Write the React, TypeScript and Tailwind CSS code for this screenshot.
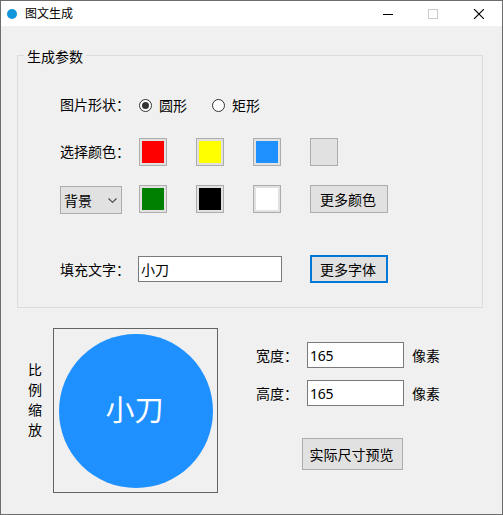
import { useState } from "react";

type Shape = "circle" | "rect";

const COLOR_ROWS = [
  [
    { name: "red", className: "bg-[#ff0000]" },
    { name: "yellow", className: "bg-[#ffff00]" },
    { name: "blue", className: "bg-[#1e90ff]" },
  ],
  [
    { name: "green", className: "bg-[#008000]" },
    { name: "black", className: "bg-black" },
    { name: "white", className: "bg-white" },
  ],
];

const BUTTON = "flex items-center justify-center border border-[#adadad] bg-[#e1e1e1] whitespace-nowrap";
const INPUT = "border border-[#7a7a7a] bg-white px-[2px] outline-none";

function TitleBar() {
  return (
    <div className="flex h-[25px] items-center bg-white pl-[6px]">
      <span className="h-[10px] w-[10px] rounded-full bg-[#1296db]" />
      <span className="ml-2 text-[12px] leading-[16px]">图文生成</span>
      <svg className="ml-auto mr-[18px] h-[10px] w-[101px]" viewBox="0 0 101 10" fill="none" shapeRendering="crispEdges">
        <path d="M0 5.5H10" stroke="#000" />
        <rect x="45.5" y="0.5" width="9" height="9" stroke="#ccc" />
        <path d="M91 0L101 10M101 0L91 10" stroke="#000" strokeWidth="1.1" shapeRendering="auto" />
      </svg>
    </div>
  );
}

function Radio({ label, checked, onSelectAction }: { label: string; checked: boolean; onSelectAction: () => void }) {
  return (
    <button type="button" role="radio" aria-checked={checked} onClick={onSelectAction} className="flex items-center">
      <span className="flex h-[13px] w-[13px] items-center justify-center rounded-full border border-[#333] bg-white">
        {checked && <span className="h-[7px] w-[7px] rounded-full bg-[#333]" />}
      </span>
      <span className="ml-[7px] mt-[2px]">{label}</span>
    </button>
  );
}

function Swatches({ colors }: { colors: { name: string; className: string }[] }) {
  return (
    <div className="flex gap-[29px]">
      {colors.map((color) => (
        <button
          key={color.name}
          type="button"
          aria-label={color.name}
          className="h-7 w-7 border border-[#adadad] bg-[#e1e1e1] p-[2px]"
        >
          <span className={`block h-[22px] w-[22px] ${color.className}`} />
        </button>
      ))}
    </div>
  );
}

function SizeField({ label, value, onChangeAction }: { label: string; value: string; onChangeAction: (v: string) => void }) {
  return (
    <div className="flex h-[26px] items-center">
      <span className="w-[51px] pt-[2px] whitespace-nowrap">{label}</span>
      <input
        value={value}
        onChange={(event) => onChangeAction(event.target.value)}
        className={`h-[26px] w-[97px] text-[14px] tracking-[-0.2px] ${INPUT}`}
      />
      <span className="ml-2 pt-[2px]">像素</span>
    </div>
  );
}

export default function App() {
  const [shape, setShape] = useState<Shape>("circle");
  const [text, setText] = useState("小刀");
  const [width, setWidth] = useState("165");
  const [height, setHeight] = useState("165");

  return (
    <div className="h-[515px] w-[503px] overflow-hidden border border-[#6d6d6d] bg-[#f0f0f0] font-['Noto_Sans','Noto_Sans_CJK_SC',sans-serif] text-[14px] leading-[20px] text-black">
      <TitleBar />

      <fieldset className="ml-4 mt-[19px] h-[263px] w-[466px] border border-[#dcdcdc]">
        <legend className="ml-[6px] h-[20px] px-[3px]">
          <span className="relative top-[2px]">生成参数</span>
        </legend>
        <div className="pl-[42px] pt-[30px]">
          <div className="flex h-[20px] items-center">
            <span className="w-[79px] whitespace-nowrap">图片形状：</span>
            <div className="flex gap-[25px]">
              <Radio label="圆形" checked={shape === "circle"} onSelectAction={() => setShape("circle")} />
              <Radio label="矩形" checked={shape === "rect"} onSelectAction={() => setShape("rect")} />
            </div>
          </div>

          <div className="mt-[23px] flex h-7 items-center">
            <span className="w-[79px] whitespace-nowrap">选择颜色：</span>
            <Swatches colors={COLOR_ROWS[0]} />
            <button type="button" aria-label="custom" className={`ml-[29px] h-7 w-7 ${BUTTON}`} />
          </div>

          <div className="mt-[19px] flex h-7 items-center">
            <button
              type="button"
              className="mr-[17px] mt-[2px] flex h-7 w-[62px] items-center justify-between border border-[#adadad] bg-[#e1e1e1] pl-[3px] pr-1"
            >
              <span className="mt-[2px]">背景</span>
              <svg className="h-[5px] w-[9px]" viewBox="0 0 9 5" fill="none">
                <path d="M0.5 0.5L4.5 4.3L8.5 0.5" stroke="#444" strokeWidth="1.1" />
              </svg>
            </button>
            <Swatches colors={COLOR_ROWS[1]} />
            <button type="button" className={`ml-[29px] h-7 w-[78px] pr-[2px] pt-[2px] ${BUTTON}`}>
              更多颜色
            </button>
          </div>

          <div className="mt-[42px] flex h-7 items-center">
            <span className="w-[78px] pt-[2px] whitespace-nowrap">填充文字：</span>
            <input
              value={text}
              onChange={(event) => setText(event.target.value)}
              className={`h-[26px] w-[144px] ${INPUT}`}
            />
            <button
              type="button"
              className="ml-7 flex h-7 w-[78px] items-center justify-center border-2 border-[#0078d7] bg-[#e1e1e1] pr-[2px] pt-[2px] whitespace-nowrap"
            >
              更多字体
            </button>
          </div>
        </div>
      </fieldset>

      <div className="mt-5 flex items-start pl-[27px]">
        <div className="mt-8 flex w-[14px] flex-col">
          {["比", "例", "缩", "放"].map((char) => (
            <span key={char}>{char}</span>
          ))}
        </div>

        <div className="ml-[11px] flex h-[165px] w-[165px] items-center justify-center border border-[#646464]">
          <div
            className={`flex h-[154px] w-[154px] items-center justify-center bg-[#1e90ff] pb-[2px] pr-[2px] text-[29px] leading-none text-white ${
              shape === "circle" ? "rounded-full" : ""
            }`}
          >
            {text}
          </div>
        </div>

        <div className="ml-[38px] mt-[14px] flex flex-col">
          <SizeField label="宽度：" value={width} onChangeAction={setWidth} />
          <div className="mt-3">
            <SizeField label="高度：" value={height} onChangeAction={setHeight} />
          </div>
          <button type="button" className={`ml-[46px] mt-8 h-8 w-[101px] pr-[2px] pt-[2px] ${BUTTON}`}>
            实际尺寸预览
          </button>
        </div>
      </div>
    </div>
  );
}
